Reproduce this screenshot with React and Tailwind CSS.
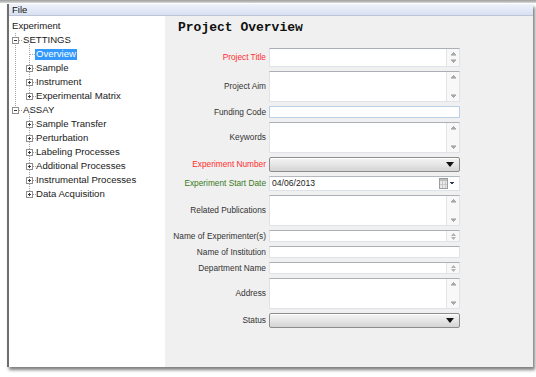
import React from "react";

const FONT = { fontFamily: '"Liberation Sans", Arial, sans-serif' };

function Arrows() {
  return (
    <div className="w-[13px] shrink-0 border-l border-[#e4e4e4] bg-[#f8f8f8] flex flex-col justify-between items-center py-[3px]">
      <svg width="7" height="4" viewBox="0 0 7 4" shapeRendering="crispEdges">
        <path d="M3.5 0 L6 3 L1 3 Z" fill="#a8a8a8" />
        <rect x="1" y="3" width="5" height="1" fill="#c8c8c8" />
      </svg>
      <svg width="7" height="4" viewBox="0 0 7 4" shapeRendering="crispEdges">
        <rect x="1" y="0" width="5" height="1" fill="#c8c8c8" />
        <path d="M1 1 L6 1 L3.5 4 Z" fill="#a8a8a8" />
      </svg>
    </div>
  );
}

function SmallArrows() {
  return (
    <div className="w-[13px] shrink-0 border-l border-[#e4e4e4] bg-[#f8f8f8] flex flex-col justify-center items-center gap-[1px]">
      <svg width="5" height="3" viewBox="0 0 5 3">
        <path d="M2.5 0 L5 3 L0 3 Z" fill="#b0b0b0" />
      </svg>
      <svg width="5" height="3" viewBox="0 0 5 3">
        <path d="M0 0 L5 0 L2.5 3 Z" fill="#b0b0b0" />
      </svg>
    </div>
  );
}

function Field({ h, kind }) {
  if (kind === "combo") {
    return (
      <div className={`${h} w-[191px] rounded-[2px] border border-[#8c8c8c] bg-linear-to-b from-[#f4f4f4] via-[#e6e6e6] to-[#d4d4d4] flex items-center justify-end pr-[5px] shadow-[inset_0_1px_0_#ffffff]`}>
        <svg width="8" height="5" viewBox="0 0 8 5">
          <path d="M0 0 L8 0 L4 5 Z" fill="#111" />
        </svg>
      </div>
    );
  }
  if (kind === "date") {
    return (
      <div className={`${h} w-[191px] bg-white border border-[#dde2e8] border-t-[#b4b8bf] flex items-center pl-[2px] pr-[4px]`}>
        <span className="flex-1 text-[8.6px] text-[#1e1e1e] leading-none">04/06/2013</span>
        <svg width="16" height="11" viewBox="0 0 16 11" shapeRendering="crispEdges">
          <rect x="0.5" y="0.5" width="8" height="10" fill="#e9e9e9" stroke="#9c9c9c" />
          <rect x="1" y="1" width="7" height="2" fill="#bdbdbd" />
          <line x1="3.5" y1="3" x2="3.5" y2="10" stroke="#c9c9c9" />
          <line x1="6.5" y1="3" x2="6.5" y2="10" stroke="#c9c9c9" />
          <line x1="1" y1="6.5" x2="8" y2="6.5" stroke="#c9c9c9" />
          <path d="M10.5 4 L15.5 4 L13 7 Z" fill="#2c3e5c" />
        </svg>
      </div>
    );
  }
  const border =
    kind === "blue"
      ? "border border-[#b8d0e8]"
      : "border border-[#dfe3e8] border-t-[#abafb6]";
  return (
    <div className={`${h} w-[191px] bg-white ${border} flex justify-end`}>
      {kind === "spin" && <Arrows />}
      {kind === "small" && <SmallArrows />}
    </div>
  );
}

const rows = [
  { label: "Project Title", color: "text-[#ff2b2b]", h: "h-[19px]", kind: "spin" },
  { label: "Project Aim", color: "text-[#333]", h: "h-[31px]", kind: "spin" },
  { label: "Funding Code", color: "text-[#333]", h: "h-[12px]", kind: "blue" },
  { label: "Keywords", color: "text-[#333]", h: "h-[31px]", kind: "spin" },
  { label: "Experiment Number", color: "text-[#ff2b2b]", h: "h-[15px]", kind: "combo" },
  { label: "Experiment Start Date", color: "text-[#3a7a22]", h: "h-[15px]", kind: "date" },
  { label: "Related Publications", color: "text-[#333]", h: "h-[31px]", kind: "spin" },
  { label: "Name of Experimenter(s)", color: "text-[#333]", h: "h-[12px]", kind: "small" },
  { label: "Name of Institution", color: "text-[#333]", h: "h-[12px]", kind: "plain" },
  { label: "Department Name", color: "text-[#333]", h: "h-[12px]", kind: "small" },
  { label: "Address", color: "text-[#333]", h: "h-[31px]", kind: "spin" },
  { label: "Status", color: "text-[#333]", h: "h-[15px]", kind: "combo" },
];

const tree = [
  { text: "Experiment", level: 0 },
  { text: "SETTINGS", level: 1 },
  { text: "Overview", level: 2, selected: true },
  { text: "Sample", level: 2 },
  { text: "Instrument", level: 2 },
  { text: "Experimental Matrix", level: 2 },
  { text: "ASSAY", level: 1 },
  { text: "Sample Transfer", level: 2 },
  { text: "Perturbation", level: 2 },
  { text: "Labeling Processes", level: 2 },
  { text: "Additional Processes", level: 2 },
  { text: "Instrumental Processes", level: 2 },
  { text: "Data Acquisition", level: 2 },
];

function TreeLines() {
  const c = (i) => 8 + 14 * i;
  const dot = { stroke: "#a3a3a3", strokeDasharray: "1 1" };
  const box = (cx, cy, plus, key) => (
    <g key={key}>
      <rect x={cx - 3.5} y={cy - 2.5} width="6" height="6" fill="#fff" stroke="#8f8f8f" />
      <line x1={cx - 2} y1={cy + 0.5} x2={cx + 1} y2={cy + 0.5} stroke="#3a3a3a" />
      {plus && <line x1={cx - 0.5} y1={cy - 1} x2={cx - 0.5} y2={cy + 2} stroke="#3a3a3a" />}
      <line x1={cx + 3} y1={cy + 0.5} x2={cx + 6} y2={cy + 0.5} {...dot} />
    </g>
  );
  const childIdx = [3, 4, 5, 7, 8, 9, 10, 11, 12];
  return (
    <svg className="absolute left-0 top-[2px] pointer-events-none" width="156" height="200" shapeRendering="crispEdges">
      <line x1="6.5" y1={c(0) + 7} x2="6.5" y2={c(6)} {...dot} />
      <line x1="20.5" y1={c(1) + 4} x2="20.5" y2={c(5)} {...dot} />
      <line x1="20.5" y1={c(6) + 4} x2="20.5" y2={c(12)} {...dot} />
      <line x1="20.5" y1={c(2) + 0.5} x2="26" y2={c(2) + 0.5} {...dot} />
      {box(7, c(1), false, "s")}
      {box(7, c(6), false, "a")}
      {childIdx.map((i) => box(21, c(i), true, "c" + i))}
    </svg>
  );
}

export default function App() {
  return (
    <div className="w-[536px] h-[377px] bg-white overflow-hidden" style={FONT}>
      <div className="h-[3px] bg-linear-to-b from-[#9d9d9d] to-[#d8d8d8]" />
      <div className="h-[1px] bg-white" />
      <div className="ml-[7px] w-[526px] h-[363px] flex flex-col border-l-2 border-[#6f6f6f] shadow-[2px_3px_3px_rgba(0,0,0,0.5)]">
        <div className="h-[12px] shrink-0 bg-linear-to-b from-[#eef2fb] to-[#d8e0f1] border-b border-[#bcc6d8] flex items-center pl-[3px]">
          <span className="text-[9.5px] leading-none text-[#111]">File</span>
        </div>
        <div className="flex flex-1 min-h-0">
          <div className="w-[156px] shrink-0 bg-white relative pt-[3px]">
            <TreeLines />
            {tree.map((t, i) => (
              <div
                key={i}
                className={`h-[14px] flex items-center text-[9.6px] leading-none text-[#1a1a1a] ${
                  t.level === 0 ? "pl-[3px]" : t.level === 1 ? "pl-[14px]" : "pl-[26px]"
                }`}
              >
                {t.selected ? (
                  <span className="relative bg-[#3399ff] text-white px-[1px] h-[11px] flex items-center">{t.text}</span>
                ) : (
                  <span className={t.level === 2 ? "pl-[1px] relative" : "relative"}>{t.text}</span>
                )}
              </div>
            ))}
          </div>
          <div className="flex-1 bg-[#f0f0f0] pt-[4px]">
            <div
              className="pl-[13px] h-[16px] flex items-center text-[13px] font-bold text-[#111] mb-[12px]"
              style={{ fontFamily: '"Liberation Mono", "Courier New", monospace' }}
            >
              Project Overview
            </div>
            <div className="flex flex-col gap-[4px]">
              {rows.map((r, i) => (
                <div key={i} className="flex items-center gap-[3px]">
                  <div className={`w-[101px] text-right text-[8.3px] leading-none ${r.color}`}>{r.label}</div>
                  <Field h={r.h} kind={r.kind} />
                </div>
              ))}
            </div>
          </div>
        </div>
      </div>
    </div>
  );
}
